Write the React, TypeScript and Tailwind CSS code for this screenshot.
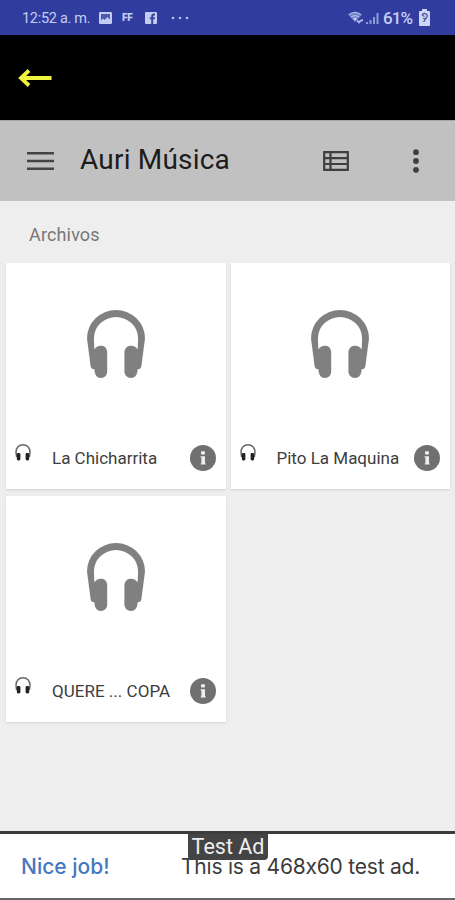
import React from 'react';

interface IconProps {
  className?: string;
}

interface Track {
  name: string;
  labelClass: string;
}

const tracks: Track[] = [
  { name: 'La Chicharrita', labelClass: 'tracking-[0px]' },
  { name: 'Pito La Maquina', labelClass: 'tracking-[0px]' },
  { name: 'QUERE ... COPA', labelClass: 'tracking-[0.02px]' },
];

const Headphones: React.FC<IconProps> = ({ className }) => (
  <svg viewBox="0 0 58 68" className={className}>
    <path
      d="M29 0A29 28.5 0 0 0 0 28.5L3.6 56C3.8 58 5 59.3 7.4 59.3C7.4 64 9.5 68 13.8 68C18 68 20.2 65 20.2 61V43C20.2 38.5 18 35.8 14 35.8C11 35.8 8.6 37.2 7.4 39.5L6.9 28.5A22.1 21.5 0 0 1 51.1 28.5L50.6 39.5C49.4 37.2 47 35.8 44 35.8C40 35.8 37.4 38.5 37.4 43V61C37.4 65 40 68 44.2 68C48.5 68 50.6 64 50.6 59.3C53 59.3 54.2 58 54.4 56L58 28.5A29 28.5 0 0 0 29 0Z"
      fill="#808080"
    />
  </svg>
);

const SmallHeadphones: React.FC<IconProps> = ({ className }) => (
  <svg viewBox="0 0 16 17" className={className}>
    <path d="M1.6 13L1 8C1 3.8 4 .8 8 .8S15 3.8 15 8L14.4 13" fill="none" stroke="#666" strokeWidth="1.5" />
    <rect x="1.8" y="9" width="3.6" height="7.5" rx="1.4" fill="#222" />
    <rect x="10.6" y="9" width="3.6" height="7.5" rx="1.4" fill="#222" />
  </svg>
);

const InfoIcon: React.FC<IconProps> = ({ className }) => (
  <svg viewBox="0 0 26 26" className={className}>
    <circle cx="13" cy="13" r="13" fill="#707070" />
    <rect x="11" y="6.2" width="4" height="3.4" rx="0.8" fill="#eee" />
    <path d="M10.6 11.2H15V18.2H15.6V19.6H10.8V18.2H11.4V12.6H10.6Z" fill="#eee" />
  </svg>
);

const StatusBar: React.FC = () => (
  <div className="flex h-[35px] items-center bg-[#303d9f] pl-[22px] text-[#c5ccf4]">
    <span className="w-[77px] shrink-0 whitespace-nowrap pt-[3px] text-[14.5px] leading-none tracking-[-0.3px]">12:52 a. m.</span>
    <svg viewBox="0 0 13 12" className="h-3 w-[13px] shrink-0">
      <rect width="13" height="12" rx="1.2" fill="#c5ccf4" />
      <path d="M2 2H11V7.5L8.5 5L5.5 8L4 6.5L2 8.5Z" fill="#4d59ae" />
    </svg>
    <span className="ml-[10px] w-[23px] shrink-0 text-[10px] font-black leading-none tracking-[-0.1px]">FF</span>
    <svg viewBox="0 0 12 12" className="h-3 w-3 shrink-0">
      <rect width="12" height="12" rx="1" fill="#c5ccf4" />
      <path d="M6.2 12V7.3H4.8V5.3H6.2V4C6.2 2.3 7.2 1.5 8.7 1.5H10V3.4H9C8.4 3.4 8.2 3.7 8.2 4.2V5.3H10L9.7 7.3H8.2V12Z" fill="#3b479f" />
    </svg>
    <svg viewBox="0 0 18 4" className="ml-[14px] h-1 w-[18px] shrink-0" fill="#b5bdec">
      <circle cx="2" cy="2" r="1.3" />
      <circle cx="9" cy="2" r="1.3" />
      <circle cx="16" cy="2" r="1.3" />
    </svg>
    <svg viewBox="0 0 17 13" className="ml-auto h-[13px] w-[17px] shrink-0">
      <path d="M.6 4Q7 -1.7 13.5 4L7 11Z" fill="#7582c8" />
      <path d="M.8 3.8Q7 -1.2 13.2 3.8M3 6.2Q7 3 11 6.2" fill="none" stroke="#b0baeb" strokeWidth="1.2" />
      <path d="M4.8 7.5Q7 6 9.2 7.5L7 10Z" fill="#c5ccf4" />
      <path d="M9 9.3L11 11.5L12.5 9.8L15 8.8" fill="none" stroke="#b0baeb" strokeWidth="1.8" />
    </svg>
    <svg viewBox="0 0 13 12" className="ml-px h-3 w-[13px] shrink-0" fill="#8e9ad9">
      <path d="M0 10H2V12H0ZM3.5 8H5.5V12H3.5ZM7 5H9V12H7ZM10.5 1H12.5V12H10.5Z" />
    </svg>
    <span className="ml-[4px] w-[36px] shrink-0 whitespace-nowrap pt-px text-[17px] font-medium leading-none tracking-[-0.9px]">61%</span>
    <svg viewBox="0 0 11 17" className="mr-[25px] h-[17px] w-[11px] shrink-0">
      <path d="M3 0H8V2H10Q11 2 11 3V16Q11 17 10 17H1Q0 17 0 16V3Q0 2 1 2H3Z" fill="#cdd4fa" />
      <path d="M3 6C4.5 3.5 8.5 4.3 8.2 7C8 9.5 5.5 10 4 9.2M3 6L5.5 7.5M7.3 9L4.5 13" fill="none" stroke="#4c5696" strokeWidth="1.3" />
    </svg>
  </div>
);

const Toolbar: React.FC = () => (
  <header className="flex h-[81px] items-center border-t border-[#a5a5a5] bg-[#c1c1c1] pl-[27px] pr-[36px]">
    <svg viewBox="0 0 27 18" className="h-[18px] w-[27px] shrink-0">
      <path d="M0 1.3H27M0 9H27M0 16.7H27" stroke="#444" strokeWidth="2.4" />
    </svg>
    <h1 className="ml-[26px] whitespace-nowrap pb-[3px] text-[28px] leading-none tracking-[0.2px] text-[#1c1c1c]">Auri Música</h1>
    <svg viewBox="0 0 26 20" className="ml-auto h-5 w-[26px] shrink-0">
      <path d="M1.2 1.2H24.8V18.8H1.2ZM7.5 1V19M1 7.2H25M1 13H25" fill="none" stroke="#3f3f3f" strokeWidth="2.2" />
    </svg>
    <svg viewBox="0 0 6 24" className="ml-[64px] h-6 w-[6px] shrink-0" fill="#3f3f3f">
      <circle cx="3" cy="3.2" r="2.9" />
      <circle cx="3" cy="12" r="2.9" />
      <circle cx="3" cy="20.8" r="2.9" />
    </svg>
  </header>
);

const TrackCard: React.FC<Track> = ({ name, labelClass }) => (
  <article className="flex h-[226px] flex-col bg-white shadow-[0_1px_2px_rgba(0,0,0,0.12)]">
    <Headphones className="mt-[47px] h-[68px] w-[58px] self-center" />
    <div className="mt-[66px] flex h-[27px] items-center pl-[9px] pr-[10px]">
      <SmallHeadphones className="mb-[11px] h-[17px] w-4 shrink-0" />
      <span className={`ml-[21px] whitespace-nowrap pt-px text-[17px] leading-none text-[#3d3d3d] ${labelClass}`}>{name}</span>
      <InfoIcon className="ml-auto h-[26px] w-[26px] shrink-0" />
    </div>
  </article>
);

const AdBanner: React.FC = () => (
  <footer className="relative flex h-[69px] items-center border-b-2 border-t-[3px] border-b-[#666] border-t-[#3c3c3c] bg-white pl-[21px] font-[Inter,sans-serif] leading-none">
    <span className="w-[160px] whitespace-nowrap text-[21px] font-medium tracking-[0px] text-[#4678bd]">Nice job!</span>
    <span className="whitespace-nowrap text-[21px] tracking-[-0.22px] text-[#3b3b3b]">This is a 468x60 test ad.</span>
    <div className="absolute left-[188px] top-0 flex h-[26px] w-[80px] items-center justify-center rounded-b-[4px] bg-[#444] font-[Roboto,sans-serif] text-[21.5px] text-[#eee]">
      Test Ad
    </div>
  </footer>
);

export default function App() {
  return (
    <div className="flex h-[900px] w-[455px] flex-col overflow-hidden bg-[#eee] font-[Roboto,sans-serif]">
      <StatusBar />
      <nav className="flex h-[85px] items-center bg-black pl-[18px]">
        <svg viewBox="0 0 34 18" className="h-[18px] w-[34px]">
          <path d="M33.5 9H3M11 1.5L3 9L11 16.5" fill="none" stroke="#eff53e" strokeWidth="3.8" />
        </svg>
      </nav>
      <Toolbar />
      <main className="flex-1">
        <h2 className="flex h-[62px] items-center pl-[29px] pt-[5px] text-[18px] leading-none tracking-[0.15px] text-[#777]">Archivos</h2>
        <div className="grid grid-cols-2 gap-x-[5px] gap-y-[7px] pl-[6px] pr-[5px]">
          {tracks.map((track) => (
            <TrackCard key={track.name} {...track} />
          ))}
        </div>
      </main>
      <AdBanner />
    </div>
  );
}
